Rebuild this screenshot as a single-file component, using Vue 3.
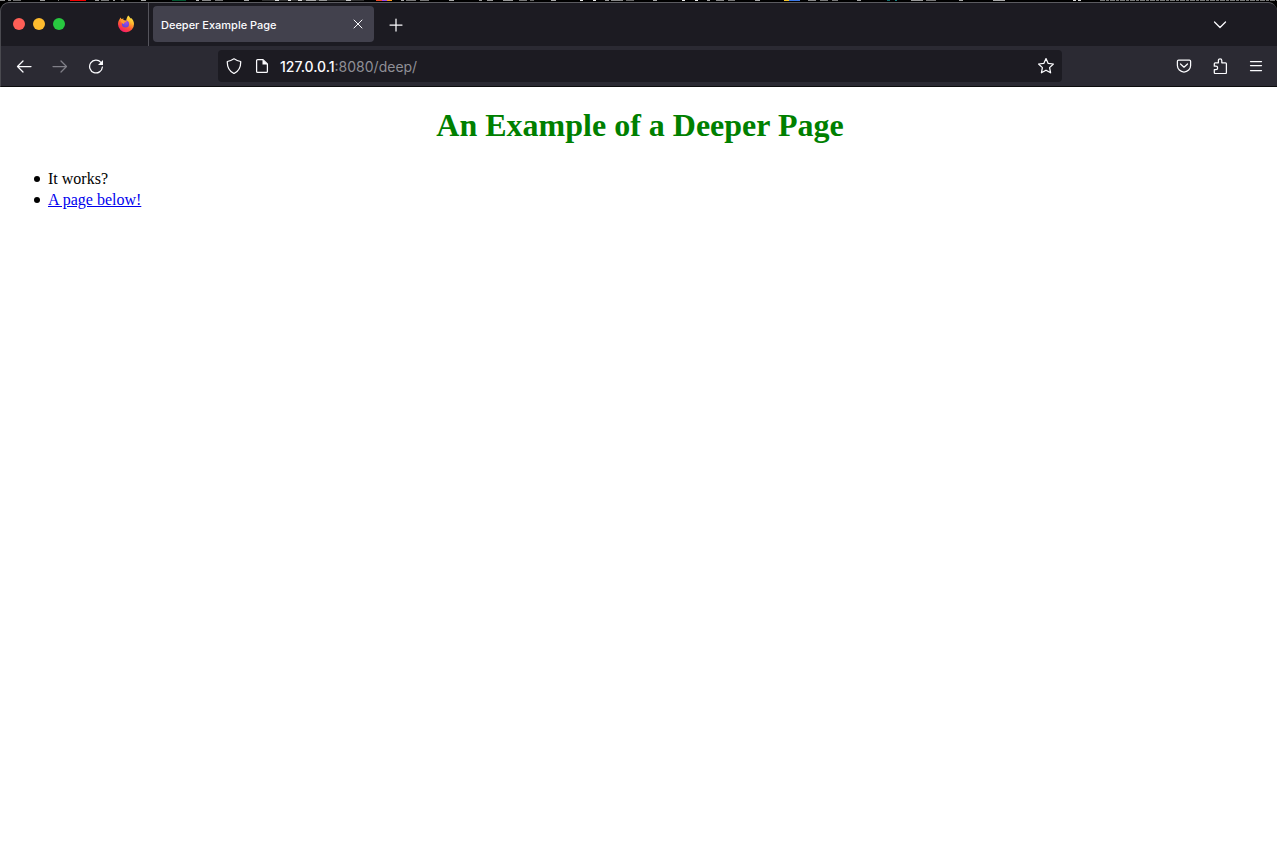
<script setup>
import { ref } from 'vue'

const host = ref('127.0.0.1')
const path = ref(':8080/deep/')

// Slivers of the window behind: [x, width, colour]
const slivers = [
  [0, 5, '#8d8d8d'], [8, 3, '#8a8a8a'], [13, 8, '#6f6f6f'], [40, 5, '#9a9a9a'], [58, 1, '#777'],
  [70, 16, '#f00000'], [95, 4, '#999'], [101, 8, '#777'], [113, 2, '#999'], [121, 3, '#666'], [141, 5, '#aaa'],
  [172, 14, '#00562f'], [196, 3, '#bbb'], [202, 9, '#888'], [215, 8, '#777'], [244, 5, '#aaa'],
  [262, 102, '#303030'], [275, 4, '#ddd'], [288, 3, '#eee'], [298, 4, '#ddd'], [306, 10, '#aaa'], [319, 8, '#999'], [346, 5, '#ccc'],
  [376, 6, '#f04b28'], [382, 5, '#9d48e8'], [387, 5, '#ff9a20'], [401, 3, '#aaa'], [406, 10, '#777'], [420, 9, '#777'], [449, 5, '#aaa'],
  [479, 3, '#999'], [487, 6, '#999'], [503, 10, '#999'], [519, 8, '#777'], [530, 4, '#666'], [551, 5, '#aaa'],
  [580, 3, '#eee'], [593, 3, '#eee'], [605, 4, '#999'], [611, 12, '#888'], [626, 8, '#666'], [653, 4, '#aaa'],
  [682, 3, '#eee'], [695, 3, '#eee'], [707, 3, '#aaa'], [716, 8, '#888'], [728, 7, '#777'], [755, 5, '#aaa'],
  [784, 5, '#f6c62c'], [789, 11, '#3b78e7'], [808, 8, '#888'], [820, 8, '#777'], [832, 6, '#777'], [857, 4, '#aaa'],
  [887, 3, '#117070'], [895, 2, '#148080'], [911, 12, '#999'], [926, 10, '#777'], [959, 4, '#aaa'],
  [993, 12, '#aaa'], [1073, 3, '#ddd'], [1078, 3, '#ddd']
]
</script>

<template>
  <div class="screen">
    <svg class="behind" height="2" aria-hidden="true">
      <rect v-for="s in slivers" :key="s[0]" :x="s[0]" y="0" :width="s[1]" height="1" :fill="s[2]" />
      <path class="texture" d="M1100 .5H1277" />
    </svg>

    <header class="chrome">
      <div class="tabbar">
        <div class="lights">
          <button class="light red" aria-label="Close window"></button>
          <button class="light amber" aria-label="Minimise window"></button>
          <button class="light green" aria-label="Zoom window"></button>
        </div>
        <button class="brand" aria-label="Firefox View">
          <svg width="18" height="18" viewBox="0 0 18 18">
            <defs>
              <linearGradient id="flame" x1=".85" y1="0" x2=".3" y2="1">
                <stop offset="0" stop-color="#fff44f" />
                <stop offset=".35" stop-color="#ffb92e" />
                <stop offset=".65" stop-color="#ff5634" />
                <stop offset="1" stop-color="#f5156c" />
              </linearGradient>
              <radialGradient id="globe" cx=".6" cy=".3" r=".7">
                <stop offset="0" stop-color="#a04bea" />
                <stop offset="1" stop-color="#5b47d8" />
              </radialGradient>
            </defs>
            <path class="flame" d="M11.200 .5c1.200.9 1.800 2 2.100 3 .4-.1.5-.5.500-.8 2 1.600 3.200 3.700 3.200 6.300a8 8 0 0 1-16 .3c0-2.300.7-4 1.800-5.400l.4-1.400 1.300 1.500c.8-.3 1.700-.4 2.600-.2-.8.5-1.200 1-1.400 1.600l3.500.4c.1-1.700.8-3.500 2-5.300z" />
            <circle cx="8.500" cy="9" r="3.600" fill="url(#globe)" />
            <path class="ear" d="M3.400 5c1.300-.8 3-.5 4.300.4l2 .5c-.1 1-1.100 1.200-1.900 1.500-.9.4-.8 1-.6 1.600-1.700-.1-3.200-1.700-3.800-4z" />
          </svg>
        </button>
        <div class="tab">
          <span class="tab-title">Deeper Example Page</span>
          <button class="tab-close" aria-label="Close tab">
            <svg width="12" height="12" viewBox="0 0 12 12"><path d="M2 2l8 8M10 2l-8 8" /></svg>
          </button>
        </div>
        <button class="new-tab" aria-label="New tab">
          <svg width="16" height="16" viewBox="0 0 16 16"><path d="M8 2v12M2 8h12" /></svg>
        </button>
        <button class="all-tabs" aria-label="List all tabs">
          <svg width="16" height="16" viewBox="0 0 16 16"><path d="M2.500 5L8 10.500 13.500 5" /></svg>
        </button>
      </div>

      <nav class="toolbar" aria-label="Navigation">
        <button class="tool" aria-label="Back">
          <svg width="16" height="16" viewBox="0 0 16 16"><path d="M15 8.500H1.500M7 3L1.500 8.500 7 14" /></svg>
        </button>
        <button class="tool" aria-label="Forward" disabled>
          <svg width="16" height="16" viewBox="0 0 16 16"><path d="M1 8.500h13.500M9 3L14.500 8.500 9 14" /></svg>
        </button>
        <button class="tool" aria-label="Reload">
          <svg width="16" height="16" viewBox="0 0 16 16"><path d="M12.900 4.400A6.400 6.400 0 1 0 14.400 9" /><path class="solid" d="M15 2v5H10z" /></svg>
        </button>
        <div class="spring"></div>
        <div class="urlbar">
          <button class="field-icon" aria-label="Tracking protection">
            <svg width="16" height="16" viewBox="0 0 16 16"><path d="M8 .8c2 1.300 4 2.200 6.700 2.700.2 5.500-1.400 9.500-6.700 12-5.300-2.500-6.900-6.500-6.700-12C4 3 6 2.100 8 .8z" /></svg>
          </button>
          <button class="field-icon" aria-label="Site information">
            <svg width="16" height="16" viewBox="0 0 16 16"><path d="M3.600 1.600h5.400l4.400 4.400v7.400a1 1 0 0 1-1 1H3.600a1 1 0 0 1-1-1V2.600a1 1 0 0 1 1-1z" /><path class="solid" d="M8.500 1.500V6.500H13.500z" /></svg>
          </button>
          <div class="address" role="textbox" aria-label="Address" contenteditable="true" spellcheck="false"><span class="host">{{ host }}</span>{{ path }}</div>
          <button class="field-icon" aria-label="Bookmark this page">
            <svg width="18" height="18" viewBox="0 0 18 18"><path d="M9 1.600l2.200 4.800 5.200.6-3.800 3.600 1 5.200L9 13.200l-4.600 2.600 1-5.200L1.600 7l5.200-.6z" /></svg>
          </button>
        </div>
        <div class="spring"></div>
        <button class="tool" aria-label="Save to Pocket">
          <svg width="16" height="16" viewBox="0 0 16 16"><path d="M2.600 2h10.800c.7 0 1.200.5 1.200 1.200v4.200a6.600 6.600 0 0 1-13.200 0V3.200C1.400 2.500 1.900 2 2.600 2z" /><path d="M4.500 6L8 9.200 11.500 6" /></svg>
        </button>
        <button class="tool" aria-label="Extensions">
          <svg width="16" height="16" viewBox="0 0 16 16"><path d="M3.200 4.800h3.200V2.500a1.700 1.700 0 0 1 3.400 0v2.300h3.700c.5 0 .9.4.9.9v8.900c0 .5-.4.9-.9.9H3.200c-.5 0-.9-.4-.9-.9v-2.900h1.600a1.700 1.700 0 0 0 0-3.500H2.300V5.700c0-.5.4-.9.900-.9z" /></svg>
        </button>
        <button class="tool" aria-label="Application menu">
          <svg width="16" height="16" viewBox="0 0 16 16"><path d="M2.500 3.500h11M2.500 7.500h11M2.500 12.500h11" /></svg>
        </button>
      </nav>
    </header>

    <main class="page">
      <h1>An Example of a Deeper Page</h1>
      <ul>
        <li>It works?</li>
        <li><a href="#below">A page below!</a></li>
      </ul>
    </main>
  </div>
</template>

<style>
body {
  background: #fff;
}
</style>

<style scoped>
.screen {
  display: flex;
  flex-direction: column;
  min-height: 100vh;
}

.behind {
  display: block;
  width: 100%;
  background: #000;
}

.chrome {
  background: #1c1b22;
  border-top: 1px solid #5b5b60;
  border-left: 1px solid #4a4a50;
  border-bottom: 1px solid #0c0c0d;
  border-radius: 9px 9px 0 0;
  box-shadow: 0 -8px 0 8px #000;
  clip-path: inset(0);
  font-family: Inter, "Liberation Sans", sans-serif;
  color: #fbfbfe;
}

button {
  display: flex;
  align-items: center;
  justify-content: center;
  padding: 0;
  border: 0;
  background: none;
  color: inherit;
}

svg path {
  fill: none;
  stroke: currentColor;
  stroke-width: 1.25;
  stroke-linecap: round;
  stroke-linejoin: round;
}

svg .solid {
  fill: currentColor;
  stroke: none;
}

svg .texture {
  stroke: #777;
  stroke-width: 1;
  stroke-linecap: butt;
  stroke-dasharray: 5 1 3 1;
}

svg .flame {
  fill: url(#flame);
  stroke: none;
}

svg .ear {
  fill: #ff9830;
  stroke: none;
}

.tabbar {
  display: flex;
  align-items: center;
  height: 43px;
}

.lights {
  display: flex;
  gap: 8px;
  padding-left: 12px;
  padding-bottom: 2px;
}

.light {
  width: 12px;
  height: 12px;
  border-radius: 50%;
}

.red {
  background: #ff5f57;
}

.amber {
  background: #febc2e;
}

.green {
  background: #28c840;
}

.brand {
  box-sizing: border-box;
  width: 45px;
  height: 43px;
  margin-left: 39px;
  padding-bottom: 2px;
  border-right: 1px solid #55545c;
}

.tab {
  display: flex;
  align-items: center;
  justify-content: space-between;
  width: 221px;
  height: 36px;
  box-sizing: border-box;
  margin-left: 4px;
  margin-bottom: 2px;
  padding: 0 4px 0 8px;
  border-radius: 4px;
  background: #42414d;
}

.tab-title {
  padding-top: 2px;
  font-size: 11px;
  font-weight: 500;
  line-height: 16px;
}

.tab-close {
  width: 24px;
  height: 24px;
}

.tab-close path {
  stroke-width: 1;
}

.new-tab {
  width: 36px;
  height: 36px;
  margin-left: 4px;
}

.all-tabs {
  width: 36px;
  height: 36px;
  margin-left: auto;
  margin-right: 39px;
}

.toolbar {
  display: flex;
  align-items: center;
  height: 40px;
  padding: 0 3px 0 5px;
  background: #2b2a33;
}

.tool {
  flex: none;
  width: 36px;
  height: 32px;
}

.tool:disabled {
  color: #807f88;
}

.spring {
  flex: 1;
}

.urlbar {
  display: flex;
  flex: 8;
  align-items: center;
  height: 32px;
  margin: 0 -1px;
  padding: 0 2px;
  border-radius: 4px;
  background: #1c1b22;
}

.field-icon {
  flex: none;
  width: 28px;
  height: 28px;
}

.address {
  flex: 1;
  padding-top: 2px;
  padding-left: 4px;
  font-size: 14px;
  line-height: 20px;
  color: #8f8f96;
  white-space: nowrap;
  outline: none;
}

.host {
  font-weight: 500;
  color: #fbfbfe;
}

.page {
  flex: 1;
  padding: 0 5px 0 8px;
  background: #fff;
  font-family: "Liberation Serif", serif;
  font-size: 16px;
  line-height: 21px;
  color: #000;
}

h1 {
  margin: 20px 0 24px;
  font-size: 32px;
  line-height: 37px;
  text-align: center;
  color: #008000;
}

ul {
  margin: 0;
  padding-left: 26px;
  list-style: none;
}

li {
  display: flex;
  align-items: center;
  gap: 8px;
}

li::before {
  content: "";
  width: 6px;
  height: 6px;
  border-radius: 50%;
  background: #000;
}

a {
  color: #0000ee;
}
</style>
